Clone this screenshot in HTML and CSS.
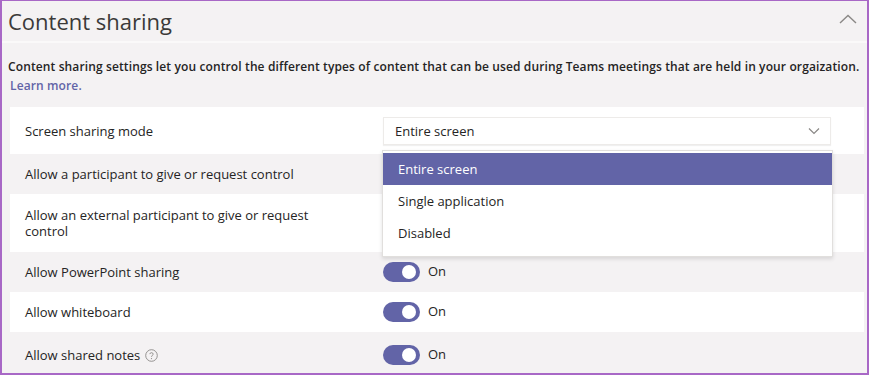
FILE: index.html
```html
<!DOCTYPE html>
<html lang="en">
<head>
    <meta charset="UTF-8">
    <title>Content sharing</title>
    <link rel="stylesheet" href="styles.css">
</head>
<body>
    <div class="frame">
        <div class="section-header">
            <h1>Content sharing</h1>
            <svg class="collapse" width="18" height="10" viewBox="0 0 18 10">
                <path d="M1 9 L9 1.5 L17 9" fill="none" stroke="#8a8886" stroke-width="1.4"/>
            </svg>
        </div>

        <p class="intro">
            Content sharing settings let you control the different types of content that can be used during Teams meetings that are held in your orgaization.
            <br><a href="#" class="learn">Learn more.</a>
        </p>

        <div class="settings">
            <div class="row white">
                <div class="label">Screen sharing mode</div>
                <div class="control">
                    <div class="select">
                        <span>Entire screen</span>
                        <svg width="12" height="8" viewBox="0 0 12 8">
                            <path d="M1 1.5 L6 6.5 L11 1.5" fill="none" stroke="#8a8886" stroke-width="1.2"/>
                        </svg>
                    </div>
                    <ul class="menu">
                        <li class="selected">Entire screen</li>
                        <li>Single application</li>
                        <li>Disabled</li>
                    </ul>
                </div>
            </div>
            <div class="row gray">
                <div class="label">Allow a participant to give or request control</div>
                <div class="control"></div>
            </div>
            <div class="row white tall">
                <div class="label">Allow an external participant to give or request control</div>
                <div class="control"></div>
            </div>
            <div class="row gray">
                <div class="label">Allow PowerPoint sharing</div>
                <div class="control"><span class="toggle"></span><span class="state">On</span></div>
            </div>
            <div class="row white">
                <div class="label">Allow whiteboard</div>
                <div class="control"><span class="toggle"></span><span class="state">On</span></div>
            </div>
            <div class="row gray last">
                <div class="label">Allow shared notes
                    <svg class="help" width="13" height="13" viewBox="0 0 13 13">
                        <circle cx="6.5" cy="6.5" r="5.8" fill="none" stroke="#8a8886" stroke-width="0.9"/>
                        <path d="M4.8 5.1 C4.8 3.2 8.2 3.2 8.2 5.1 C8.2 6.3 6.5 6.4 6.5 7.8" fill="none" stroke="#8a8886" stroke-width="0.9"/>
                        <circle cx="6.5" cy="9.6" r="0.6" fill="#8a8886"/>
                    </svg>
                </div>
                <div class="control"><span class="toggle"></span><span class="state">On</span></div>
            </div>
        </div>
    </div>
</body>
</html>
```

FILE: styles.css
```css
body {
    margin: 0;
    font-family: 'Open Sans', 'Noto Sans', sans-serif;
    color: #252424;
    background-color: #f4f2f3;
}
.frame {
    box-sizing: border-box;
    width: 869px;
    height: 375px;
    border: 2px solid #a868c6;
    border-top-width: 1px;
    overflow: hidden;
}
.section-header {
    display: flex;
    align-items: center;
    justify-content: space-between;
    height: 40px;
    padding: 0 10px 0 6px;
    border-bottom: 2px solid #faf9f9;
}
.section-header h1 {
    margin: 0;
    font-size: 22px;
    font-weight: 400;
    color: #3b3a39;
}
.collapse {
    margin-top: -4px;
}
.intro {
    margin: 14px 0 0;
    padding-left: 6px;
    font-size: 12px;
    font-weight: 600;
    line-height: 19px;
    letter-spacing: 0.12px;
}
.learn {
    color: #6264a7;
    text-decoration: none;
    font-weight: 600;
    margin-left: 2px;
}
.settings {
    margin: 12px 3px 0 8px;
}
.row {
    display: flex;
    align-items: center;
    height: 40px;
    font-size: 13px;
}
.row.white {
    background-color: #fff;
}
.row.gray {
    background-color: #f4f2f3;
}
.row:first-child {
    height: 47px;
}
.row.tall {
    height: 58px;
}
.row.last {
    height: 42px;
    padding-top: 2px;
}
.label {
    box-sizing: border-box;
    flex: 0 0 373px;
    padding: 0 60px 0 15px;
    line-height: 16px;
    display: flex;
    align-items: center;
    gap: 3px;
}
.control {
    position: relative;
    flex: 1;
    display: flex;
    align-items: center;
    gap: 8px;
}
.select {
    box-sizing: border-box;
    display: flex;
    align-items: center;
    justify-content: space-between;
    width: 448px;
    height: 28px;
    padding: 0 10px 0 11px;
    background-color: #fff;
    border: 1px solid #edebe9;
    box-shadow: 0 1px 1px rgba(0,0,0,0.06);
}
.menu {
    position: absolute;
    top: 33px;
    left: -1px;
    width: 449px;
    margin: 0;
    padding: 2px 0 7px;
    list-style: none;
    background-color: #fff;
    border: 1px solid #e1dfdd;
    box-shadow: 0 2px 4px rgba(0,0,0,0.12);
    z-index: 2;
}
.menu li {
    height: 32px;
    line-height: 33px;
    padding-left: 15px;
}
.menu li.selected {
    background-color: #6264a7;
    color: #fff;
}
.toggle {
    position: relative;
    width: 37px;
    height: 20px;
    border-radius: 10px;
    background-color: #6264a7;
}
.toggle::after {
    content: "";
    position: absolute;
    top: 3px;
    right: 4px;
    width: 14px;
    height: 14px;
    border-radius: 50%;
    background-color: #fff;
}
.state {
    margin-top: -3px;
}
.help {
    margin-left: 2px;
}
```
